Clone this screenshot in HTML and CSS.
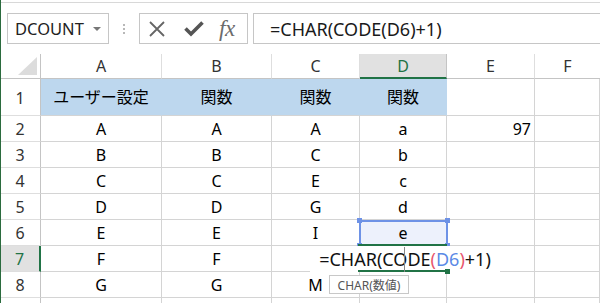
FILE: index.html
```html
<!DOCTYPE html>
<html lang="ja">
<head>
<meta charset="utf-8">
<link rel="stylesheet" href="styles.css">
</head>
<body>
<div class="app">
  <div class="topline"></div>
  <div class="toolbar">
    <div class="namebox"><span class="nb-text">DCOUNT</span><span class="caret"></span></div>
    <div class="dots"><i></i><i></i><i></i></div>
    <div class="fnbtns">
      <svg class="ico" width="18" height="18" viewBox="0 0 18 18"><path d="M2 2 L16 16 M16 2 L2 16" stroke="#666" stroke-width="1.8" fill="none"/></svg>
      <svg class="ico" width="20" height="16" viewBox="0 0 20 16"><path d="M1.5 7.5 L7 13 L18.5 1.5" stroke="#555" stroke-width="3.6" fill="none" stroke-linejoin="miter"/></svg>
      <span class="fx">fx</span>
    </div>
    <div class="formula">=CHAR(CODE(D6)+1)</div>
  </div>
  <div class="sheet">
    <div class="grid">
      <div class="corner"><svg width="19" height="18" viewBox="0 0 19 18"><polygon points="19,0 19,18 0,18" fill="#dcdcdc"/></svg></div>
      <div class="ch">A</div><div class="ch">B</div><div class="ch">C</div><div class="ch ch-sel">D</div><div class="ch">E</div><div class="ch">F</div>

      <div class="rh">1</div>
      <div class="c fill">ユーザー設定</div><div class="c fill">関数</div><div class="c fill">関数</div><div class="c fill">関数</div><div class="c"></div><div class="c"></div>

      <div class="rh">2</div>
      <div class="c">A</div><div class="c">A</div><div class="c">A</div><div class="c">a</div><div class="c num">97</div><div class="c"></div>

      <div class="rh">3</div>
      <div class="c">B</div><div class="c">B</div><div class="c">C</div><div class="c">b</div><div class="c"></div><div class="c"></div>

      <div class="rh">4</div>
      <div class="c">C</div><div class="c">C</div><div class="c">E</div><div class="c">c</div><div class="c"></div><div class="c"></div>

      <div class="rh">5</div>
      <div class="c">D</div><div class="c">D</div><div class="c">G</div><div class="c">d</div><div class="c"></div><div class="c"></div>

      <div class="rh">6</div>
      <div class="c">E</div><div class="c">E</div><div class="c">I</div><div class="c sel-bg">e</div><div class="c"></div><div class="c"></div>

      <div class="rh rh-sel">7</div>
      <div class="c">F</div><div class="c">F</div><div class="c">K</div><div class="c"></div><div class="c"></div><div class="c"></div>

      <div class="rh">8</div>
      <div class="c">G</div><div class="c">G</div><div class="c">M</div><div class="c"></div><div class="c"></div><div class="c"></div>

      <div class="rh"></div>
      <div class="c"></div><div class="c"></div><div class="c"></div><div class="c"></div><div class="c"></div><div class="c"></div>
    </div>

    <div class="selection">
      <span class="h h-tl"></span><span class="h h-tr"></span><span class="h h-bl"></span><span class="h h-br"></span>
    </div>
    <div class="editor">=CHAR(CODE<span class="paren">(</span><span class="ref">D6</span><span class="paren">)</span>+1)</div>
    <div class="active"><span class="fillhandle"></span></div>
    <div class="caretline"></div>
    <div class="tip">CHAR(数値)</div>
  </div>
</div>
</body>
</html>
```

FILE: styles.css
```css
html, body {
  margin: 0;
  padding: 0;
  background: #fff;
}
body {
  font-family: "Noto Sans", "Noto Sans CJK JP", sans-serif;
  color: #000;
  overflow: hidden;
}
.app {
  position: relative;
  width: 600px;
  height: 303px;
  overflow: hidden;
  border-left: 1px solid #2b6b3e;
  box-sizing: border-box;
}
.topline {
  height: 2px;
  border-bottom: 1px solid #d8d8d8;
}
.toolbar {
  display: flex;
  align-items: center;
  height: 31px;
  margin-top: 10px;
  padding-left: 6px;
}
.namebox {
  width: 102px;
  height: 31px;
  box-sizing: border-box;
  border: 1px solid #c6c6c6;
  display: flex;
  align-items: center;
  padding-left: 7px;
  font-size: 16.5px;
  color: #222;
}
.nb-text { flex: 1; }
.caret {
  width: 0; height: 0;
  border-left: 4px solid transparent;
  border-right: 4px solid transparent;
  border-top: 4px solid #777;
  margin-right: 7px;
}
.dots {
  width: 30px;
  display: flex;
  flex-direction: column;
  align-items: center;
  gap: 2px;
}
.dots i {
  display: block;
  width: 2px;
  height: 2px;
  background: #b8b8b8;
}
.fnbtns {
  width: 109px;
  height: 31px;
  box-sizing: border-box;
  border: 1px solid #c6c6c6;
  display: flex;
  align-items: center;
  padding-left: 8px;
  gap: 0;
}
.fnbtns .ico:nth-child(1) { margin-right: 18px; }
.fnbtns .ico:nth-child(2) { margin-right: 15px; }
.fx {
  font-family: "Liberation Serif", "DejaVu Serif", serif;
  font-style: italic;
  font-size: 23px;
  color: #6b6b6b;
  letter-spacing: -0.5px;
  line-height: 1;
}
.formula {
  flex: 1;
  margin-left: 5px;
  height: 31px;
  box-sizing: border-box;
  border: 1px solid #c6c6c6;
  border-right: none;
  display: flex;
  align-items: center;
  padding-left: 16px;
  font-size: 18px;
  color: #1a1a1a;
}

.sheet {
  position: relative;
  margin-top: 10px;
  margin-left: -1px;
}
.grid {
  display: grid;
  grid-template-columns: 41px 121px 110px 88px 87px 88px 65px;
  grid-template-rows: 25px 37px repeat(8, 26px);
  font-size: 16px;
}
.corner {
  border-right: 1px solid #c4c4c4;
  border-bottom: 1px solid #c4c4c4;
  display: flex;
  align-items: flex-end;
  justify-content: flex-end;
  padding: 0 3px 3px 0;
}
.corner svg { display: block; }
.ch {
  border-right: 1px solid #dedede;
  border-bottom: 1px solid #c4c4c4;
  display: flex;
  align-items: center;
  justify-content: center;
  color: #333;
}
.ch-sel {
  background: #e1e1e1;
  color: #217346;
  border-bottom: 2px solid #217346;
  border-right-color: #c4c4c4;
}
.grid > .ch:nth-child(7) { border-right: none; }
.rh {
  border-right: 1px solid #c4c4c4;
  border-bottom: 1px solid #dedede;
  display: flex;
  align-items: center;
  justify-content: center;
  color: #333;
}
.grid > .rh:nth-child(8) {
  align-items: flex-end;
  padding-bottom: 6px;
  box-sizing: border-box;
}
.rh-sel {
  background: #e1e1e1;
  color: #217346;
  border-right: 2px solid #217346;
}
.c {
  border-right: 1px solid #d4d4d4;
  border-bottom: 1px solid #d4d4d4;
  display: flex;
  align-items: center;
  justify-content: center;
  white-space: nowrap;
}
.fill {
  background: #bdd7ee;
  border-right-color: #bdd7ee;
  padding-bottom: 3px;
  box-sizing: border-box;
}
.sel-bg { background: #edf1fc; }
.num {
  justify-content: flex-end;
  padding-right: 3px;
}

.selection {
  position: absolute;
  left: 359px;
  top: 166px;
  width: 89px;
  height: 26px;
  box-sizing: border-box;
  border: 2px solid #6e92e6;
}
.h {
  position: absolute;
  width: 5px;
  height: 5px;
  background: #6e92e6;
}
.h-tl { left: -4px; top: -4px; }
.h-tr { right: -4px; top: -4px; }
.h-bl { left: -4px; bottom: -4px; }
.h-br { right: -4px; bottom: -4px; }
.editor {
  position: absolute;
  left: 310px;
  top: 192px;
  width: 190px;
  height: 26px;
  background: #fff;
  display: flex;
  align-items: center;
  justify-content: center;
  font-size: 18px;
  color: #111;
}
.paren { color: #e8556e; }
.ref { color: #5b8ae6; }
.active {
  position: absolute;
  left: 358px;
  top: 190px;
  width: 89px;
  height: 28px;
  box-sizing: border-box;
  border-top: 2px solid #217346;
  border-bottom: 2px solid #217346;
}
.fillhandle {
  position: absolute;
  right: -3px;
  bottom: -4px;
  width: 5px;
  height: 5px;
  background: #217346;
}
.caretline {
  position: absolute;
  left: 404px;
  top: 193px;
  width: 1px;
  height: 25px;
  background: #888;
}
.tip {
  position: absolute;
  left: 329px;
  top: 221px;
  width: 80px;
  height: 19px;
  box-sizing: border-box;
  border: 1px solid #c8c8c8;
  background: #fff;
  font-size: 12px;
  color: #555;
  display: flex;
  align-items: center;
  justify-content: center;
}
```
